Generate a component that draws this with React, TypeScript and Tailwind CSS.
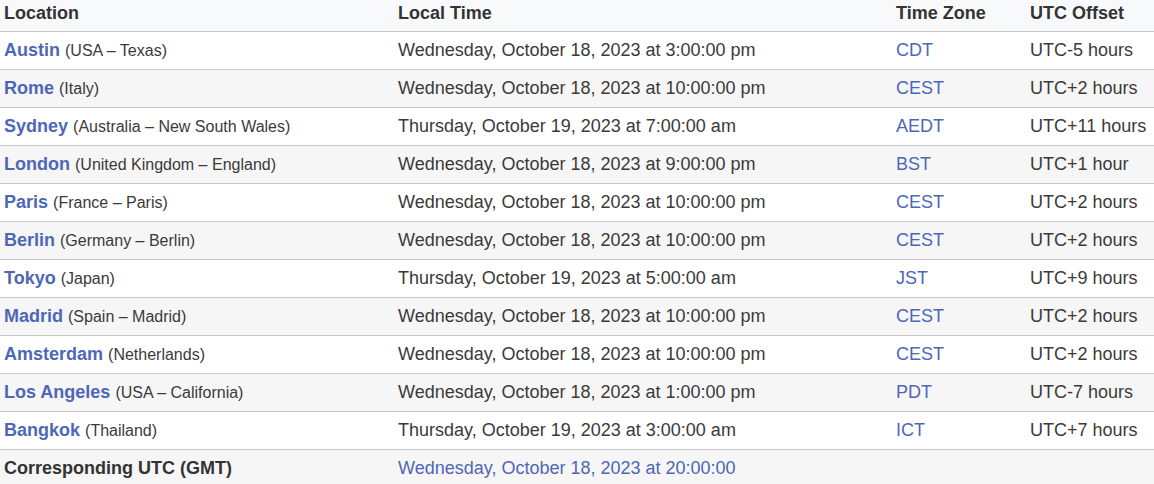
const rows = [
  { city: "Austin", region: "(USA – Texas)", time: "Wednesday, October 18, 2023 at 3:00:00 pm", tz: "CDT", offset: "UTC-5 hours" },
  { city: "Rome", region: "(Italy)", time: "Wednesday, October 18, 2023 at 10:00:00 pm", tz: "CEST", offset: "UTC+2 hours" },
  { city: "Sydney", region: "(Australia – New South Wales)", time: "Thursday, October 19, 2023 at 7:00:00 am", tz: "AEDT", offset: "UTC+11 hours" },
  { city: "London", region: "(United Kingdom – England)", time: "Wednesday, October 18, 2023 at 9:00:00 pm", tz: "BST", offset: "UTC+1 hour" },
  { city: "Paris", region: "(France – Paris)", time: "Wednesday, October 18, 2023 at 10:00:00 pm", tz: "CEST", offset: "UTC+2 hours" },
  { city: "Berlin", region: "(Germany – Berlin)", time: "Wednesday, October 18, 2023 at 10:00:00 pm", tz: "CEST", offset: "UTC+2 hours" },
  { city: "Tokyo", region: "(Japan)", time: "Thursday, October 19, 2023 at 5:00:00 am", tz: "JST", offset: "UTC+9 hours" },
  { city: "Madrid", region: "(Spain – Madrid)", time: "Wednesday, October 18, 2023 at 10:00:00 pm", tz: "CEST", offset: "UTC+2 hours" },
  { city: "Amsterdam", region: "(Netherlands)", time: "Wednesday, October 18, 2023 at 10:00:00 pm", tz: "CEST", offset: "UTC+2 hours" },
  { city: "Los Angeles", region: "(USA – California)", time: "Wednesday, October 18, 2023 at 1:00:00 pm", tz: "PDT", offset: "UTC-7 hours" },
  { city: "Bangkok", region: "(Thailand)", time: "Thursday, October 19, 2023 at 3:00:00 am", tz: "ICT", offset: "UTC+7 hours" },
];

export default function App() {
  return (
    <div className="w-[1154px] h-[484px] overflow-hidden bg-white font-['Liberation_Sans',Arial,sans-serif] text-[#3a3a3a]">
      <table className="w-full border-collapse text-[18px] leading-[27px]">
        <colgroup>
          <col className="w-[394px]" />
          <col className="w-[498px]" />
          <col className="w-[134px]" />
          <col />
        </colgroup>
        <thead>
          <tr className="h-[31px] bg-[#f8f9fa] border-b border-[#c8c8c8] text-[#333]">
            <th className="text-left font-bold pl-1 pb-[4px]">Location</th>
            <th className="text-left font-bold pl-1 pb-[4px]">Local Time</th>
            <th className="text-left font-bold pl-1 pb-[4px]">Time Zone</th>
            <th className="text-left font-bold pl-1 pb-[4px]">UTC Offset</th>
          </tr>
        </thead>
        <tbody>
          {rows.map((r, i) => (
            <tr
              key={r.city}
              className={`h-[38px] border-b border-[#c8c8c8] ${i % 2 === 1 ? "bg-[#f6f6f6]" : "bg-white"}`}
            >
              <td className="pl-1 pb-[1px]">
                <a className="font-bold text-[#4d67b8]">{r.city}</a>{" "}
                <span className="text-[16px]">{r.region}</span>
              </td>
              <td className="pl-1 pb-[1px]">{r.time}</td>
              <td className="pl-1 pb-[1px]">
                <a className="text-[#4d67b8]">{r.tz}</a>
              </td>
              <td className="pl-1 pb-[1px]">{r.offset}</td>
            </tr>
          ))}
          <tr className="h-[38px] bg-[#f6f6f6]">
            <td className="pl-1 pb-[1px] font-bold text-[#333]">Corresponding UTC (GMT)</td>
            <td className="pl-1 pb-[1px] text-[#4d67b8]">Wednesday, October 18, 2023 at 20:00:00</td>
            <td />
            <td />
          </tr>
        </tbody>
      </table>
    </div>
  );
}
